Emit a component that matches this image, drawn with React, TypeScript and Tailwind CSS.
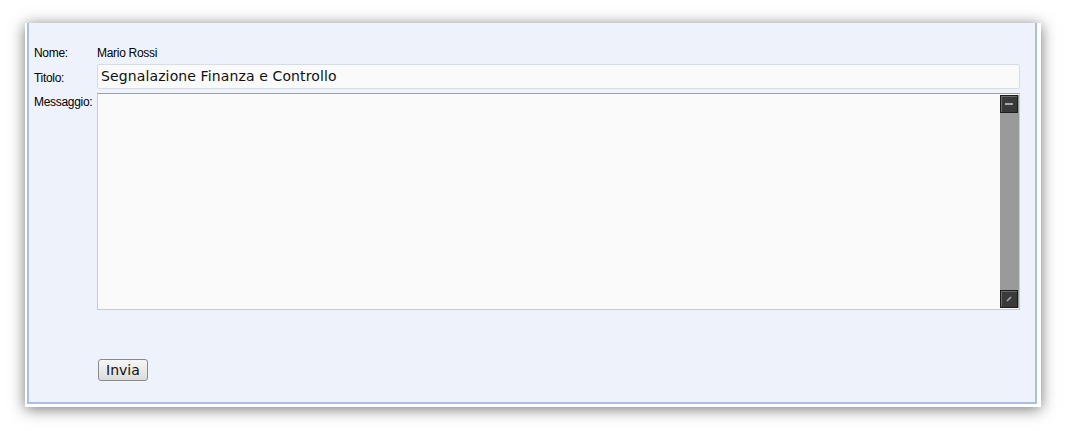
import React from 'react';

function ScrollButton({ glyph }: { glyph: 'minus' | 'grip' }) {
  return (
    <div className="h-[18px] w-[18px] border border-[#1c1c1c] bg-[#3a3a3a] flex items-center justify-center shadow-[inset_1px_1px_0_#6a6a6a]">
      {glyph === 'minus' ? (
        <div className="h-[2px] w-[8px] bg-[#a8a8a8]" />
      ) : (
        <svg width="8" height="8" viewBox="0 0 8 8">
          <path d="M2 6 L6 2" stroke="#b0b0b0" strokeWidth="1.5" />
        </svg>
      )}
    </div>
  );
}

export default function App() {
  return (
    <div className="w-[1067px] h-[431px] bg-white pt-[23px] pl-[25px]">
      <div className="w-[1016px] h-[384px] bg-white shadow-[0_2px_14px_rgba(0,0,0,0.55)] pl-[2px] pr-[4px] pb-[3px]">
        <div className="h-full bg-[#eef3fb] border-l-2 border-r-2 border-b-2 border-[#a9c0e3] pt-[21px] pl-[5px] pr-[15px] font-['Liberation_Sans',Arial,sans-serif] text-[12px] text-black">
          <div className="flex items-center h-[17px]">
            <span className="w-[63px] tracking-[-0.3px]">Nome:</span>
            <span className="tracking-[-0.3px]">Mario Rossi</span>
          </div>
          <div className="flex items-start mt-[3px]">
            <span className="w-[63px] pt-[5px] tracking-[-0.3px]">Titolo:</span>
            <div className="flex-1 h-[25px] bg-[#fafafa] border border-[#d8dde4] rounded-[2px] flex items-center pl-[3px] font-['DejaVu_Sans',Verdana,sans-serif] text-[14px] tracking-[0.12px] text-[#111]">
              Segnalazione Finanza e Controllo
            </div>
          </div>
          <div className="flex items-start mt-[4px]">
            <span className="w-[63px] tracking-[-0.3px]">Messaggio:</span>
            <div className="flex-1 h-[217px] bg-[#fafafa] border border-[#b5d0ea] border-t-[#7fa8d6] flex justify-end">
              <div className="w-[19px] my-[1px] bg-[#9a9a9a] flex flex-col justify-between">
                <ScrollButton glyph="minus" />
                <ScrollButton glyph="grip" />
              </div>
            </div>
          </div>
          <div className="pl-[64px] mt-[49px]">
            <button className="h-[22px] px-[7px] rounded-[3px] border border-[#8a8a8a] bg-gradient-to-b from-[#f6f6f6] to-[#dcdcdc] font-['DejaVu_Sans',Verdana,sans-serif] text-[14px] text-[#111] leading-none">
              Invia
            </button>
          </div>
        </div>
      </div>
    </div>
  );
}
